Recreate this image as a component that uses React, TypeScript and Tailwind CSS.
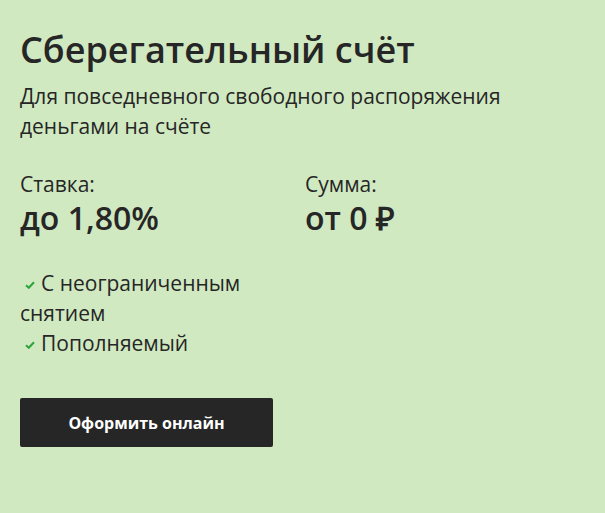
export default function App() {
  const features = ['С неограниченным снятием', 'Пополняемый']

  return (
    <div className="min-h-[513px] w-[605px] bg-[#d0e9c1] px-5 pt-[26px] text-[#262626] font-['Open_Sans',sans-serif]">
      <h1 className="text-[36px] font-semibold leading-[48px]">Сберегательный счёт</h1>
      <p className="mt-[7px] text-[21px] leading-[30px] max-w-[520px]">
        Для повседневного свободного распоряжения деньгами на счёте
      </p>

      <div className="mt-[28px] grid grid-cols-2 w-[570px]">
        <div>
          <div className="text-[21px] leading-[30px]">Ставка:</div>
          <div className="text-[32px] font-semibold leading-[38px]">до 1,80%</div>
          <ul className="mt-[31px] w-[265px]">
            {features.map((f) => (
              <li key={f} className="text-[21px] leading-[30px]">
                <svg
                  viewBox="0 0 10 8"
                  className="ml-[5px] mr-[6px] inline-block h-[8px] w-[10px] align-[2px]"
                  fill="none"
                  stroke="#2ca53a"
                  strokeWidth="2"
                >
                  <path d="M1 4.2 L3.8 6.8 L9 1.2" />
                </svg>
                {f}
              </li>
            ))}
          </ul>
        </div>
        <div>
          <div className="text-[21px] leading-[30px]">Сумма:</div>
          <div className="text-[32px] font-semibold leading-[38px]">от 0 ₽</div>
        </div>
      </div>

      <button className="mt-[40px] flex h-[49px] w-[253px] items-center justify-center rounded-[2px] bg-[#262626] text-[16px] font-bold text-white">
        Оформить онлайн
      </button>
    </div>
  )
}
